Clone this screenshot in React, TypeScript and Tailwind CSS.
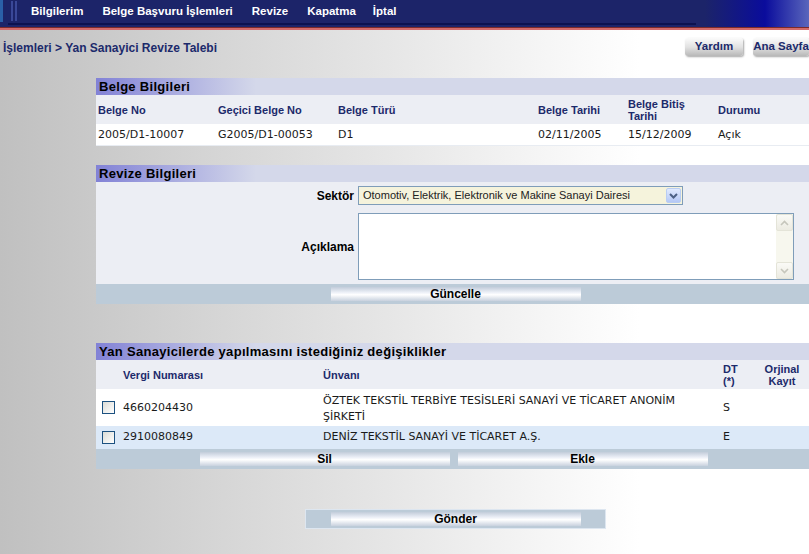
import React from "react";

const bold = "font-['Liberation_Sans',Arial,sans-serif] font-bold";
const data = "font-['DejaVu_Sans',Verdana,sans-serif]";
const navy = "text-[#1c2a6b]";

const PanelTitle = ({ children }: { children: React.ReactNode }) => (
  <div
    className={`h-[17px] flex items-center pl-[3px] text-[13px] tracking-[0.3px] text-black ${bold} bg-[linear-gradient(to_right,#8282d6,#d4d8ea_160px)]`}
  >
    {children}
  </div>
);

const BarButton = ({ label, w = "w-[250px]" }: { label: string; w?: string }) => (
  <div
    className={`${w} h-[14px] flex items-center justify-center text-[12px] text-black ${bold} bg-[linear-gradient(to_bottom,#c2ccda,#eef1f8_40%,#ffffff_55%,#c8d1de)]`}
  >
    {label}
  </div>
);

const Checkbox = () => (
  <div className="w-[13px] h-[13px] border border-[#1c5180] bg-[linear-gradient(135deg,#dcdcd6,#ffffff)]" />
);

const TopButton = ({ label, w }: { label: string; w: string }) => (
  <div
    className={`${w} h-[18px] rounded-[3px] flex items-center justify-center text-[11.5px] whitespace-nowrap ${navy} ${bold} bg-[linear-gradient(to_bottom,#fbfbfb,#e2e2e2_50%,#b8b8b8)] shadow-[1px_1px_2px_rgba(0,0,0,0.35)]`}
  >
    {label}
  </div>
);

export default function App() {
  return (
    <div className="w-full min-h-[554px] overflow-hidden bg-[linear-gradient(to_right,#c0c0c0,#ffffff_640px)]">
      {/* top menu */}
      <div className="relative h-[27px] bg-[linear-gradient(to_right,#1c2469_0,#1c2469_705px,#0a0c9c_765px,#5a66bc)]">
        <div className="absolute left-0 top-0 w-[3px] h-[22px] bg-[#2a5fa8]" />
        <div className="absolute left-[11px] top-[1px] w-[2px] h-[20px] bg-[#3a4898]" />
        <div className="absolute left-[15px] top-[1px] w-[2px] h-[20px] bg-[#3a4898]" />
        <div className="absolute left-[8px] top-[23px] w-[688px] h-[2px] bg-[#0c1250]" />
        <div className={`flex items-center h-[24px] text-white text-[11.5px] ${bold}`}>
          <span className="ml-[31px]">Bilgilerim</span>
          <span className="ml-[19px]">Belge Başvuru İşlemleri</span>
          <span className="ml-[19px]">Revize</span>
          <span className="ml-[19px]">Kapatma</span>
          <span className="ml-[17px]">İptal</span>
        </div>
      </div>
      <div className="h-[1px] bg-[#7a2a2a]" />
      <div className="h-[2px] bg-[#d26a6a]" />

      {/* breadcrumb */}
      <div className="h-[48px] flex items-start justify-between">
        <div className={`mt-[9px] ml-[3px] text-[12px] ${navy} ${bold}`}>
          İşlemleri &gt; Yan Sanayici Revize Talebi
        </div>
        <div className="mt-[8px] flex gap-[10px]">
          <TopButton label="Yardım" w="w-[58px]" />
          <TopButton label="Ana Sayfa" w="w-[56px]" />
        </div>
      </div>

      <div className="ml-[96px]">
        {/* Belge Bilgileri */}
        <PanelTitle>Belge Bilgileri</PanelTitle>
        <div
          className={`grid grid-cols-[120px_120px_200px_90px_90px_1fr] items-center pl-[2px] h-[29px] bg-[#eceef4] text-[11px] leading-[12px] ${navy} ${bold}`}
        >
          <div>Belge No</div>
          <div>Geçici Belge No</div>
          <div>Belge Türü</div>
          <div>Belge Tarihi</div>
          <div>
            Belge Bitiş
            <br />
            Tarihi
          </div>
          <div>Durumu</div>
        </div>
        <div
          className={`grid grid-cols-[120px_120px_200px_90px_90px_1fr] items-start pt-[4px] pl-[2px] h-[21px] bg-white text-[11px] leading-[13px] text-[#1a1a1a] ${data}`}
        >
          <div>2005/D1-10007</div>
          <div>G2005/D1-00053</div>
          <div>D1</div>
          <div>02/11/2005</div>
          <div>15/12/2009</div>
          <div>Açık</div>
        </div>
        <div className="h-[1px] bg-[#e8ecf2]" />

        {/* Revize Bilgileri */}
        <div className="mt-[19px]">
          <PanelTitle>Revize Bilgileri</PanelTitle>
          <div className="bg-[#eceef4] pt-[4px] pb-[4px] flex flex-col gap-[8px]">
            <div className="flex items-center">
              <div className={`w-[258px] text-right text-[12px] text-black ${bold}`}>Sektör</div>
              <div className="ml-[4px] w-[325px] h-[19px] border border-[#7f9db9] bg-[#f5f3dc] flex items-center justify-between">
                <span className="pl-[4px] text-[11px] text-[#222] font-['Liberation_Sans',Arial,sans-serif]">
                  Otomotiv, Elektrik, Elektronik ve Makine Sanayi Dairesi
                </span>
                <div className="mr-[1px] w-[15px] h-[15px] rounded-[2px] border border-[#b9cdf3] bg-[linear-gradient(to_bottom,#e1eafe,#b4c8f6)] flex items-center justify-center">
                  <svg width="9" height="6" viewBox="0 0 9 6">
                    <path d="M1 1 L4.5 4.5 L8 1" stroke="#4d6185" strokeWidth="2" fill="none" />
                  </svg>
                </div>
              </div>
            </div>
            <div className="flex items-center">
              <div className={`w-[258px] text-right text-[12px] text-black ${bold}`}>Açıklama</div>
              <div className="ml-[4px] w-[436px] h-[67px] border border-[#7f9db9] bg-white flex justify-end">
                <div className="w-[17px] h-full bg-[#f7f7ee] flex flex-col justify-between">
                  <div className="h-[17px] border border-[#e4e4d8] rounded-[2px] bg-[linear-gradient(to_bottom,#fafaf6,#ecebe2)] flex items-center justify-center">
                    <svg width="9" height="6" viewBox="0 0 9 6">
                      <path d="M1 5 L4.5 1.5 L8 5" stroke="#c6c6bc" strokeWidth="1.6" fill="none" />
                    </svg>
                  </div>
                  <div className="h-[17px] border border-[#e4e4d8] rounded-[2px] bg-[linear-gradient(to_bottom,#fafaf6,#ecebe2)] flex items-center justify-center">
                    <svg width="9" height="6" viewBox="0 0 9 6">
                      <path d="M1 1 L4.5 4.5 L8 1" stroke="#c6c6bc" strokeWidth="1.6" fill="none" />
                    </svg>
                  </div>
                </div>
              </div>
            </div>
          </div>
          <div className="h-[20px] bg-[#bccbd8] flex items-center justify-center pl-[6px]">
            <BarButton label="Güncelle" />
          </div>
        </div>

        {/* Yan Sanayi */}
        <div className="mt-[39px]">
          <PanelTitle>Yan Sanayicilerde yapılmasını istediğiniz değişiklikler</PanelTitle>
          <div
            className={`grid grid-cols-[27px_200px_400px_32px_1fr] items-center h-[29px] bg-[#eceef4] text-[11px] leading-[12px] ${navy} ${bold}`}
          >
            <div />
            <div>Vergi Numarası</div>
            <div>Ünvanı</div>
            <div>
              DT
              <br />
              (*)
            </div>
            <div className="text-center">
              Orjinal
              <br />
              Kayıt
            </div>
          </div>
          <div
            className={`grid grid-cols-[27px_200px_400px_32px_1fr] items-center h-[37px] bg-white text-[11px] leading-[16px] text-[#1a1a1a] ${data}`}
          >
            <div className="pl-[6px]">
              <Checkbox />
            </div>
            <div>4660204430</div>
            <div className="pt-[2px]">
              ÖZTEK TEKSTİL TERBİYE TESİSLERİ SANAYİ VE TİCARET ANONİM
              <br />
              ŞİRKETİ
            </div>
            <div>S</div>
            <div />
          </div>
          <div
            className={`grid grid-cols-[27px_200px_400px_32px_1fr] items-center h-[23px] bg-[#dce9f8] text-[11px] text-[#1a1a1a] ${data}`}
          >
            <div className="pl-[6px]">
              <Checkbox />
            </div>
            <div>2910080849</div>
            <div>DENİZ TEKSTİL SANAYİ VE TİCARET A.Ş.</div>
            <div>E</div>
            <div />
          </div>
          <div className="h-[20px] bg-[#bccbd8] flex items-center justify-center gap-[8px] pl-[2px]">
            <BarButton label="Sil" />
            <BarButton label="Ekle" />
          </div>
        </div>

        {/* Gönder */}
        <div className="mt-[40px] flex justify-center pl-[6px]">
          <div className="w-[301px] h-[20px] bg-[#bccbd8] border border-[#dde6f0] flex items-center justify-center">
            <BarButton label="Gönder" />
          </div>
        </div>
      </div>
    </div>
  );
}
